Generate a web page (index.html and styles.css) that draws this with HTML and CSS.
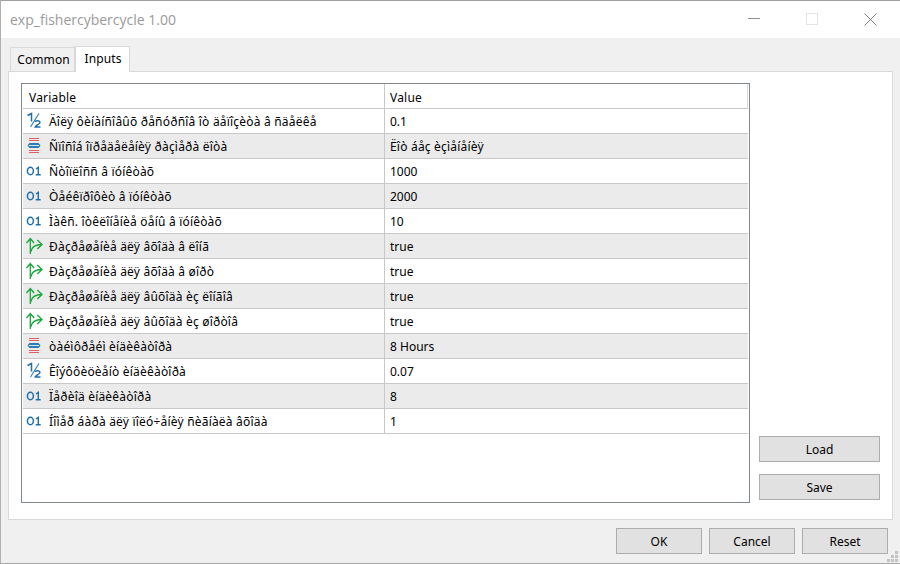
FILE: index.html
```html
<!DOCTYPE html>
<html lang="en">
<head>
<meta charset="utf-8">
<title>exp_fishercybercycle 1.00</title>
<link rel="stylesheet" href="styles.css">
</head>
<body>
<svg class="defs" width="0" height="0">
  <symbol id="i-frac" viewBox="0 0 18 18">
    <path d="M1.500 3.500 5.500 1.500V9.500" fill="none" stroke="#1f6fae" stroke-width="1.500"/>
    <path d="M13 1.500 4.500 15" fill="none" stroke="#3f8ac2" stroke-width="1.300"/>
    <path d="M9.200 9.800c.8-1.500 4.800-1.500 4.800.6 0 1.700-3.800 2.600-4.800 4.600h5.300" fill="none" stroke="#1f6fae" stroke-width="1.400"/>
  </symbol>
  <symbol id="i-enum" viewBox="0 0 18 18">
    <path d="M3 1.500h10M3 3.500h10M3 13.500h10M3 15.500h10" fill="none" stroke="#e0625e" stroke-width="1"/>
    <path d="M3.500 6h9l2 2.500-2 2.500h-9l-2-2.500z" fill="#2b7bb9"/>
    <path d="M3 8.500h10" stroke="#d5e6f3" stroke-width="1"/>
  </symbol>
  <symbol id="i-int" viewBox="0 0 18 18">
    <ellipse cx="4.400" cy="9" rx="3" ry="3.700" fill="none" stroke="#1f6fae" stroke-width="1.500"/>
    <path d="M10 7 12.300 5.400V12.700M9.700 12.700h5" fill="none" stroke="#1f6fae" stroke-width="1.400"/>
  </symbol>
  <symbol id="i-bool" viewBox="0 0 18 18">
    <path d="M4.300 17V1.500M.5 6 4.300 1.500 8.100 6" fill="none" stroke="#16a83a" stroke-width="1.300"/>
    <path d="M4.800 15C5.500 10 9.500 7.500 16 7.500M11.300 3 16 7.500 11.300 12" fill="none" stroke="#16a83a" stroke-width="1.300"/>
  </symbol>
</svg>
<div class="window">
  <header class="titlebar">
    <span class="title">exp_fishercybercycle 1.00</span>
    <div class="controls">
      <svg class="ctl" width="13" height="13" viewBox="0 0 13 13"><path d="M0 5.500h12" stroke="#909090" stroke-width="1"/></svg>
      <svg class="ctl" width="13" height="13" viewBox="0 0 13 13"><rect x=".5" y=".5" width="11" height="11" fill="none" stroke="#e3e3e3"/></svg>
      <svg class="ctl" width="13" height="13" viewBox="0 0 13 13"><path d="M.5.5l12 12M12.500.5l-12 12" stroke="#808080" stroke-width="1"/></svg>
    </div>
  </header>
  <div class="content">
    <div class="tabs">
      <div class="tab">Common</div>
      <div class="tab active">Inputs</div>
    </div>
    <div class="panel">
      <div class="grid">
        <div class="row head"><div class="c1">Variable</div><div class="c2">Value</div></div>
        <div class="row"><div class="c1"><svg class="ico"><use href="#i-frac"/></svg><span class="label">Äîëÿ ôèíàíñîâûõ ðåñóðñîâ îò äåïîçèòà â ñäåëêå</span></div><div class="c2">0.1</div></div>
        <div class="row alt"><div class="c1"><svg class="ico"><use href="#i-enum"/></svg><span class="label">Ñïîñîá îïðåäåëåíèÿ ðàçìåðà ëîòà</span></div><div class="c2"><span class="label">Ëîò áåç èçìåíåíèÿ</span></div></div>
        <div class="row"><div class="c1"><svg class="ico"><use href="#i-int"/></svg><span class="label">Ñòîïëîññ â ïóíêòàõ</span></div><div class="c2">1000</div></div>
        <div class="row alt"><div class="c1"><svg class="ico"><use href="#i-int"/></svg><span class="label">Òåéêïðîôèò â ïóíêòàõ</span></div><div class="c2">2000</div></div>
        <div class="row"><div class="c1"><svg class="ico"><use href="#i-int"/></svg><span class="label">Ìàêñ. îòêëîíåíèå öåíû â ïóíêòàõ</span></div><div class="c2">10</div></div>
        <div class="row alt"><div class="c1"><svg class="ico"><use href="#i-bool"/></svg><span class="label">Ðàçðåøåíèå äëÿ âõîäà â ëîíã</span></div><div class="c2">true</div></div>
        <div class="row"><div class="c1"><svg class="ico"><use href="#i-bool"/></svg><span class="label">Ðàçðåøåíèå äëÿ âõîäà â øîðò</span></div><div class="c2">true</div></div>
        <div class="row alt"><div class="c1"><svg class="ico"><use href="#i-bool"/></svg><span class="label">Ðàçðåøåíèå äëÿ âûõîäà èç ëîíãîâ</span></div><div class="c2">true</div></div>
        <div class="row"><div class="c1"><svg class="ico"><use href="#i-bool"/></svg><span class="label">Ðàçðåøåíèå äëÿ âûõîäà èç øîðòîâ</span></div><div class="c2">true</div></div>
        <div class="row alt"><div class="c1"><svg class="ico"><use href="#i-enum"/></svg><span class="label">òàéìôðåéì èíäèêàòîðà</span></div><div class="c2">8 Hours</div></div>
        <div class="row"><div class="c1"><svg class="ico"><use href="#i-frac"/></svg><span class="label">Êîýôôèöèåíò èíäèêàòîðà</span></div><div class="c2">0.07</div></div>
        <div class="row alt"><div class="c1"><svg class="ico"><use href="#i-int"/></svg><span class="label">Ïåðèîä èíäèêàòîðà</span></div><div class="c2">8</div></div>
        <div class="row"><div class="c1"><svg class="ico"><use href="#i-int"/></svg><span class="label">Íîìåð áàðà äëÿ ïîëó÷åíèÿ ñèãíàëà âõîäà</span></div><div class="c2">1</div></div>
      </div>
      <div class="side">
        <button class="btn side-btn">Load</button>
        <button class="btn side-btn">Save</button>
      </div>
    </div>
    <footer class="footer">
      <button class="btn foot-btn">OK</button>
      <button class="btn foot-btn">Cancel</button>
      <button class="btn foot-btn">Reset</button>
    </footer>
    <svg class="grip" width="12" height="12" viewBox="0 0 12 12"><path d="M8 0h3v3H8zM4 4h3v3H4zM8 4h3v3H8zM0 8h3v3H0zM4 8h3v3H4zM8 8h3v3H8z" fill="#c4c4c4"/></svg>
  </div>
</div>
</body>
</html>
```
FILE: styles.css
```css
* { box-sizing: border-box; }
html, body { margin: 0; padding: 0; }
body {
  width: 900px;
  height: 564px;
  overflow: hidden;
  font-family: "Noto Sans", sans-serif;
  font-size: 12px;
  color: #000;
}
.defs { position: absolute; }
.window {
  width: 900px;
  height: 564px;
  display: flex;
  flex-direction: column;
  border-top: 1px solid #a0a0a0;
  border-left: 1px solid #b0b0b0;
  border-bottom: 1px solid #a8a8a8;
  background: #f0f0f0;
}
.titlebar {
  height: 37px;
  background: #fff;
  display: flex;
  align-items: center;
  justify-content: space-between;
}
.title {
  margin-left: 9px;
  font-family: "Open Sans", sans-serif;
  font-size: 14px;
  color: #9a9a9a;
}
.controls { display: flex; gap: 45px; margin-right: 23px; }
.ctl { display: block; }
.content {
  position: relative;
  flex: 1;
  display: flex;
  flex-direction: column;
  padding: 7px 7px 0 7px;
  min-height: 0;
}
.tabs { display: flex; align-items: flex-end; height: 26px; padding-left: 2px; }
.tab {
  height: 24px;
  width: 65px;
  display: flex;
  align-items: center;
  justify-content: center;
  padding-left: 2px;
  letter-spacing: .1px;
  background: #f0f0f0;
  border: 1px solid #d9d9d9;
  border-bottom: none;
}
.tab.active {
  height: 26px;
  width: 55px;
  background: #fff;
  margin-bottom: -1px;
  position: relative;
  padding-left: 1px;
  padding-bottom: 3px;
}
.panel {
  height: 449px;
  background: #fff;
  border: 1px solid #d9d9d9;
  display: flex;
  padding: 11px 0 0 12px;
}
.grid {
  width: 729px;
  height: 420px;
  border: 1px solid #828790;
  padding: 0 1px;
  flex: none;
}
.row {
  display: flex;
  height: 25px;
  border-bottom: 1px solid #c8c8c8;
  background: #fff;
}
.row.alt { background: #ebebeb; }
.c1, .c2 {
  display: flex;
  align-items: center;
  white-space: nowrap;
}
.c1 { width: 361px; padding-left: 3px; flex: none; gap: 5px; }
.c2 { flex: 1; padding-left: 5px; border-left: 1px solid #c8c8c8; }
.label { letter-spacing: .2px; }
.head .c1 { padding-left: 6px; padding-top: 2px; letter-spacing: .2px; }
.head .c2 { border-right: 1px solid #d9d9d9; padding-top: 2px; letter-spacing: .2px; }
.ico { width: 18px; height: 18px; flex: none; display: block; }
.side {
  display: flex;
  flex-direction: column;
  gap: 12px;
  margin-left: 9px;
  padding-top: 353px;
}
.btn {
  font: inherit;
  color: #000;
  background: #e1e1e1;
  border: 1px solid #adadad;
  border-radius: 0;
  padding: 0;
  height: 26px;
  display: block;
}
.side-btn { width: 121px; }
.footer {
  display: flex;
  justify-content: flex-end;
  gap: 7px;
  padding-top: 8px;
  margin-right: 5px;
}
.foot-btn { width: 86px; }
.grip { position: absolute; right: 1px; bottom: 0; }
```
